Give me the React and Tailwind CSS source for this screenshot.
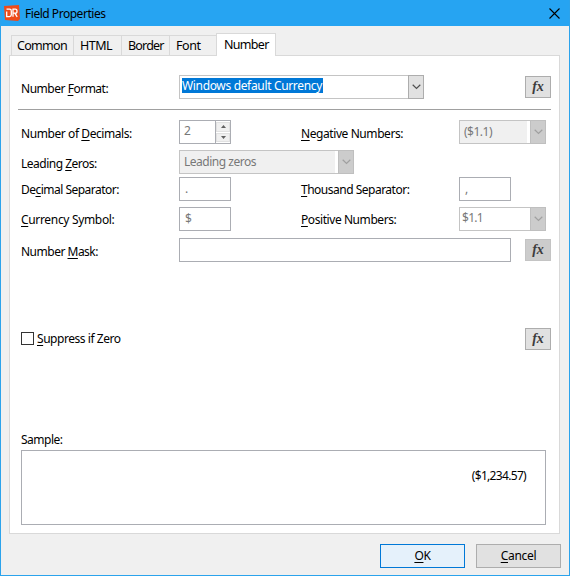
const u = "underline underline-offset-2 decoration-1";

function Label({ pre = "", hot, post = "", className = "" }) {
  return (
    <span className={`block whitespace-pre ${className}`}>
      {pre}
      <span className={u}>{hot}</span>
      {post}
    </span>
  );
}

function Chevron({ color }) {
  return (
    <svg width="9" height="6" viewBox="0 0 9 6" fill="none" stroke={color} strokeWidth="1.2">
      <path d="M0.7 0.8 L4.5 4.5 L8.3 0.8" />
    </svg>
  );
}

function Combo({ className, boxClass = "", disabled, children }) {
  return (
    <div className={`flex h-6 border border-[#c4c4c4] ${className}`}>
      <div className={`flex-1 ${boxClass}`}>{children}</div>
      <div
        className={`-my-px -mr-px flex w-4 items-center justify-center border ${
          disabled ? "border-[#bfbfbf] bg-[#cccccc]" : "border-[#adadad] bg-[#e1e1e1]"
        }`}
      >
        <Chevron color={disabled ? "#a0a0a0" : "#505050"} />
      </div>
    </div>
  );
}

function FxButton({ disabled, className = "" }) {
  return (
    <button
      className={`flex h-[22px] w-[26px] items-center justify-center border pb-px font-['Liberation_Serif',serif] text-[14px] leading-none font-bold italic text-[#3c3c3c] ${
        disabled ? "border-[#c4c4c4] bg-[#cccccc]" : "border-[#adadad] bg-[#e1e1e1]"
      } ${className}`}
    >
      fx
    </button>
  );
}

function Field({ className, children }) {
  return (
    <div className={`h-6 border border-[#abadb3] bg-white leading-[22px] text-[#787878] ${className}`}>
      {children}
    </div>
  );
}

function Tab({ className, children }) {
  return (
    <div className={`h-5 border-t border-r border-[#d9d9d9] bg-[#f0f0f0] text-[12.5px] leading-5 ${className}`}>
      {children}
    </div>
  );
}

export default function App() {
  return (
    <div className="flex h-[576px] w-[570px] flex-col overflow-hidden border border-t-0 border-[#2ba3ec] bg-[#f0f0f0] font-['Noto_Sans','Open_Sans',sans-serif] text-[12px] leading-6 text-black">
      <header className="flex h-[26px] shrink-0 items-center bg-[#26a4f2] pr-[9px] pl-[3px]">
        <svg width="16" height="16" viewBox="0 0 16 16" fill="none">
          <path d="M0 1 L15 0 L16 14 L14 16 L1 15 Z" fill="#ee4b1a" />
          <path d="M2.5 4.2 H5.5 Q7.3 4.2 7.3 6 V9.8 Q7.3 11.6 5.5 11.6 H2.7 V6.5 M9 11.8 V4.2 H11.4 Q13 4.2 13 6.2 Q13 8.2 11.4 8.2 H9 M11 8.3 L13.2 11.8" stroke="#fff" strokeWidth="1.3" />
        </svg>
        <span className="ml-[5px] pt-px tracking-[-0.47px]">Field Properties</span>
        <svg className="ml-auto" width="11" height="11" viewBox="0 0 11 11" stroke="#000" strokeWidth="1.1">
          <path d="M0.5 0.5 L10.5 10.5 M10.5 0.5 L0.5 10.5" />
        </svg>
      </header>

      <nav className="mt-[7px] ml-[10px] flex h-[22px] shrink-0 items-end">
        <Tab className="w-[63px] border-l pl-[5px] tracking-[-0.7px]">Common</Tab>
        <Tab className="w-12 pl-[6px] tracking-[-0.5px]">HTML</Tab>
        <Tab className="w-12 pl-[6px] tracking-[-0.8px]">Border</Tab>
        <Tab className="w-[46px] border-r-0 pl-[6px] tracking-[-0.45px]">Font</Tab>
        <div className="relative -mb-px h-[23px] w-[60px] border border-b-0 border-[#d9d9d9] bg-white pl-[7px] text-[12.5px] leading-[21px] tracking-[-0.7px]">
          Number
        </div>
      </nav>

      <main className="ml-2 flex h-[479px] w-[551px] shrink-0 flex-col border border-[#d9d9d9] bg-white pl-[11px]">
        <div className="mt-[19px] flex h-6">
          <Label pre="Number " hot="F" post="ormat:" className="w-[158px] pt-[2px] tracking-[-0.48px]" />
          <Combo className="w-[245px]" boxClass="pt-[2px] pl-[2px]">
            <span className="block w-[141px] bg-[#0078d7] leading-[15px] whitespace-nowrap text-white tracking-[-0.34px]">
              Windows default Currency
            </span>
          </Combo>
          <FxButton className="mt-px ml-[101px]" />
        </div>

        <div className="mt-[10px] -ml-[3px] h-px w-[533px] bg-[#a0a0a0]" />

        <div className="mt-[10px] flex h-6">
          <Label pre="Number of " hot="D" post="ecimals:" className="w-[158px] pt-[2px] tracking-[-0.42px]" />
          <div className="flex h-6 w-[52px] border border-[#abadb3] text-[#787878]">
            <div className="flex-1 pl-[4px] leading-[19px]">2</div>
            <div className="flex w-[15px] flex-col gap-px border-l border-[#abadb3] py-px">
              <div className="flex flex-1 items-center justify-center border border-[#e1e1e1] bg-[#f0f0f0]">
                <svg width="5" height="3" viewBox="0 0 5 3"><path d="M0 3 L2.5 0 L5 3 Z" fill="#606060" /></svg>
              </div>
              <div className="flex flex-1 items-center justify-center border border-[#e1e1e1] bg-[#f0f0f0]">
                <svg width="5" height="3" viewBox="0 0 5 3"><path d="M0 0 L2.5 3 L5 0 Z" fill="#606060" /></svg>
              </div>
            </div>
          </div>
          <Label hot="N" post="egative Numbers:" className="ml-[70px] w-[158px] pt-[2px] tracking-[-0.42px]" />
          <Combo disabled className="w-[87px]" boxClass="mr-[3px] bg-[#f0f0f0] pl-[4px] leading-[22px] text-[#787878] tracking-[-0.5px]">
            ($1.1)
          </Combo>
        </div>

        <div className="mt-[6px] flex h-6">
          <Label pre="Leading " hot="Z" post="eros:" className="w-[158px] pt-[2px] tracking-[-0.5px]" />
          <Combo disabled className="w-[175px]" boxClass="mr-[3px] bg-[#f0f0f0] pl-[4px] leading-[22px] text-[#787878] tracking-[-0.48px]">
            Leading zeros
          </Combo>
        </div>

        <div className="mt-[3px] flex h-6">
          <Label pre="De" hot="c" post="imal Separator:" className="w-[158px] pt-px tracking-[-0.52px]" />
          <Field className="w-[52px] pl-[5px]">.</Field>
          <Label hot="T" post="housand Separator:" className="ml-[70px] w-[158px] pt-px tracking-[-0.5px]" />
          <Field className="w-[52px] pl-[5px]">,</Field>
        </div>

        <div className="mt-[6px] flex h-6">
          <Label hot="C" post="urrency Symbol:" className="w-[158px] pt-px tracking-[-0.33px]" />
          <Field className="w-[52px] pl-[5px]">$</Field>
          <Label hot="P" post="ositive Numbers:" className="ml-[70px] w-[158px] pt-px tracking-[-0.43px]" />
          <Combo disabled className="w-[87px]" boxClass="pl-[2px] leading-[20px] text-[#787878] tracking-[-0.7px]">
            $1.1
          </Combo>
        </div>

        <div className="mt-[7px] flex h-6">
          <Label pre="Number " hot="M" post="ask:" className="w-[158px] pt-[2px] tracking-[-0.5px]" />
          <Field className="w-[332px]" />
          <FxButton disabled className="mt-px ml-[14px]" />
        </div>

        <div className="mt-[66px] flex h-[22px]">
          <span className="mt-1 h-[13px] w-[13px] border border-[#333] bg-white" />
          <Label hot="S" post="uppress if Zero" className="ml-[3px] w-[488px] leading-[22px] tracking-[-0.45px]" />
          <FxButton />
        </div>

        <div className="mt-[76px] h-6 pt-[2px] tracking-[-0.5px]">Sample:</div>
        <div className="h-[75px] w-[525px] border border-[#abadb3] pt-[13px] pr-[19px] text-right tracking-[-0.68px]">
          ($1,234.57)
        </div>
      </main>

      <footer className="mt-[10px] mr-2 flex justify-end gap-[11px]">
        <button className="h-6 w-[85px] border border-[#0078d7] bg-[#e5f1fb] leading-[22px] tracking-[-0.3px]">
          <span className={u}>O</span>K
        </button>
        <button className="h-6 w-[85px] border border-[#adadad] bg-[#e1e1e1] leading-[22px] tracking-[-0.3px]">
          <span className={u}>C</span>ancel
        </button>
      </footer>
    </div>
  );
}
